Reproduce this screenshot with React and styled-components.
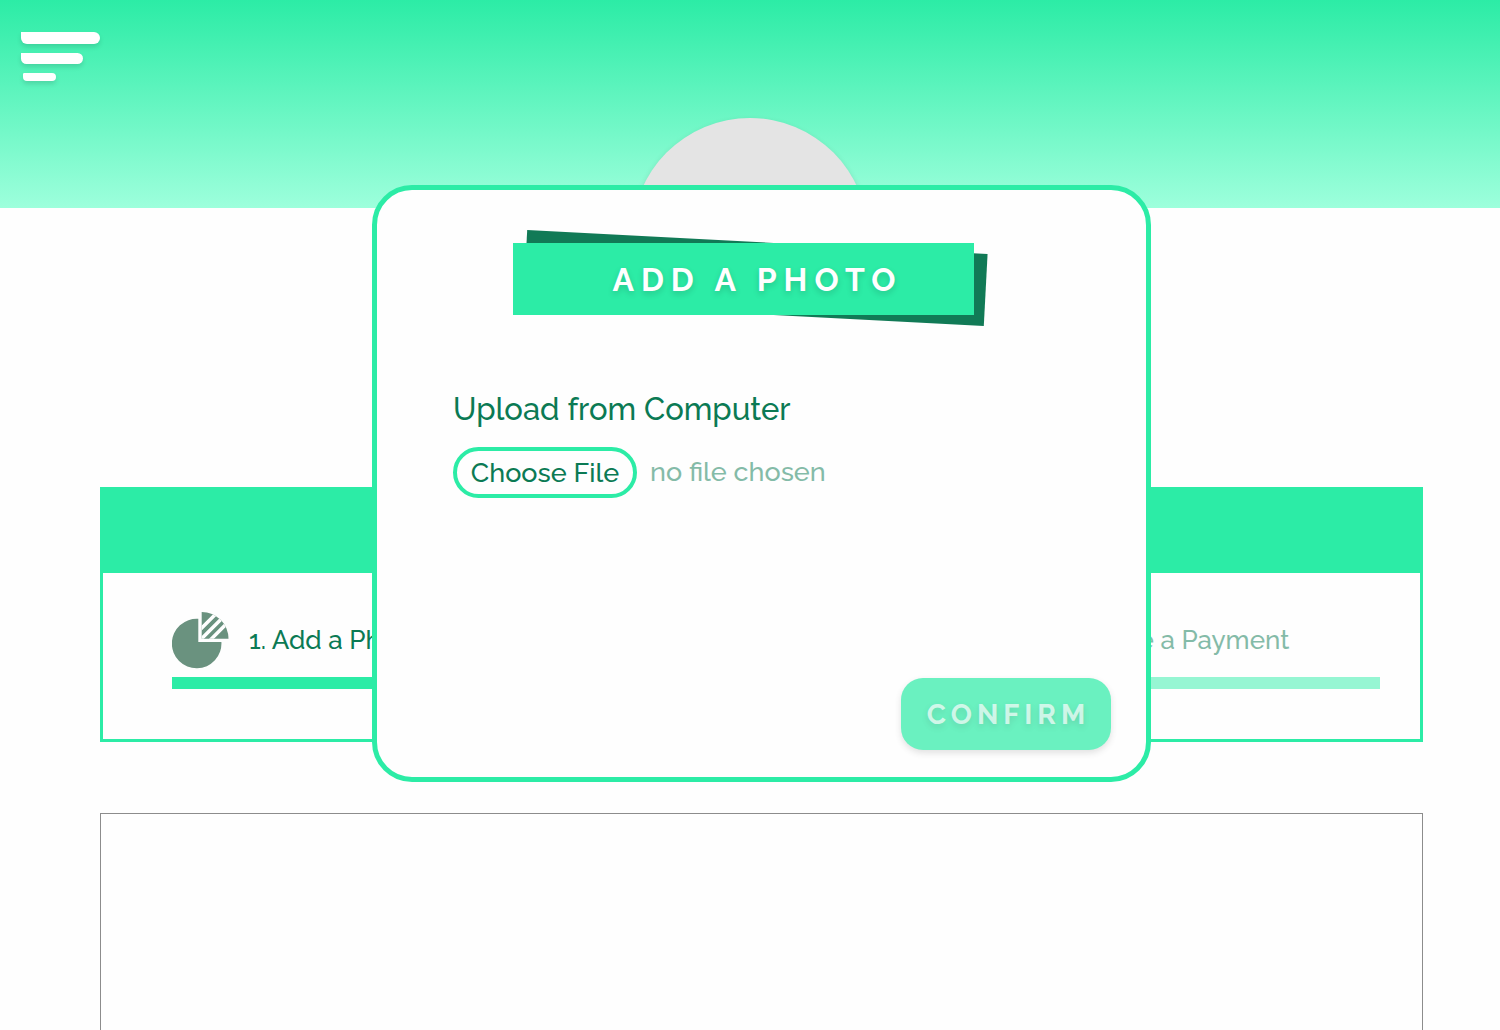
import React from 'react';
import styled, { createGlobalStyle } from 'styled-components';

const GlobalStyle = createGlobalStyle`
    * {
        box-sizing: border-box;
    }
    body {
        margin: 0;
        background-color: #fefefe;
        font-family: 'Raleway', 'Lato', sans-serif;
        font-weight: 500;
        color: #0b7a54;
    }
`;

const Header = styled.header`
    height: 208px;
    padding: 32px 21px;
    background: linear-gradient(#2ceca6, #9dffdc);
`;

const MenuButton = styled.button`
    display: flex;
    flex-direction: column;
    align-items: flex-start;
    gap: 9px;
    padding: 0;
    border: none;
    background: none;
    cursor: pointer;
`;

const MenuBar = styled.span`
    width: ${(props) => props.$width}px;
    height: ${(props) => props.$height}px;
    margin-left: ${(props) => (props.$indent ? 2 : 0)}px;
    border-radius: ${(props) => (props.$indent ? '2px 6px 6px 6px' : '0 6px 6px 6px')};
    background-color: white;
    box-shadow: 0 3px 5px rgba(0, 0, 0, 0.12);
`;

const Avatar = styled.div`
    width: 236px;
    height: 236px;
    margin: -90px auto 0;
    border-radius: 50%;
    background-color: #e4e4e4;
    box-shadow: 0 3px 6px rgba(0, 0, 0, 0.16);
`;

const Content = styled.main`
    display: flex;
    flex-direction: column;
    gap: 71px;
    padding: 133px 77px 0 100px;
`;

const StepsCard = styled.section`
    border: 3px solid #2ceca6;
`;

const StepsHead = styled.div`
    height: 83px;
    background-color: #2ceca6;
`;

const StepList = styled.ol`
    display: grid;
    grid-template-columns: repeat(3, 1fr);
    column-gap: 12px;
    margin: 0;
    padding: 38px 40px 50px 69px;
    list-style: none;
`;

const StepLabel = styled.div`
    display: flex;
    align-items: center;
    gap: 20px;
    height: 58px;
    font-size: 26px;
    white-space: nowrap;
    opacity: ${(props) => (props.$active ? 1 : 0.5)};
`;

const StepBar = styled.div`
    height: 12px;
    margin-top: 8px;
    background-color: ${(props) => (props.$active ? '#2ceca6' : '#96f6d3')};
`;

const Board = styled.section`
    min-height: 400px;
    border: 1px solid #8c8c8c;
`;

const Overlay = styled.div`
    position: fixed;
    inset: 0;
    display: flex;
    justify-content: center;
    align-items: flex-start;
    padding: 185px 77px 0 100px;
`;

const Modal = styled.div`
    display: flex;
    flex-direction: column;
    width: 779px;
    min-height: 597px;
    padding: 53px 35px 27px 76px;
    border: 5px solid #2ceca6;
    border-radius: 40px;
    background-color: #fefefe;
`;

const Banner = styled.div`
    position: relative;
    width: 461px;
    margin-left: 60px;

    &::before {
        content: '';
        position: absolute;
        inset: 0;
        background-color: #117a56;
        transform: translate(12px, -1px) rotate(3deg);
    }
`;

const Title = styled.h1`
    position: relative;
    margin: 0;
    padding: 2px 0 0 28px;
    background-color: #2ceca6;
    color: white;
    font-size: 32px;
    font-weight: 700;
    line-height: 70px;
    letter-spacing: 7px;
    text-align: center;
    text-shadow: 0 3px 6px rgba(0, 0, 0, 0.16);
`;

const UploadTitle = styled.h2`
    margin: 72px 0 16px;
    font-size: 31px;
    font-weight: 500;
    line-height: 44px;
`;

const FileRow = styled.div`
    display: flex;
    align-items: center;
    gap: 13px;
    font-size: 27px;
`;

const FileInput = styled.input`
    position: absolute;
    width: 1px;
    height: 1px;
    opacity: 0;
`;

const FileButton = styled.label`
    width: 184px;
    border: 4px solid #2ceca6;
    border-radius: 26px;
    line-height: 43px;
    text-align: center;
    cursor: pointer;
`;

const FileName = styled.span`
    padding-bottom: 2px;
    opacity: 0.5;
`;

const ConfirmButton = styled.button`
    align-self: flex-end;
    width: 210px;
    height: 72px;
    margin-top: auto;
    padding: 0 0 0 5px;
    border: none;
    border-radius: 22px;
    background-color: #2ceca6;
    box-shadow: 0 3px 6px rgba(0, 0, 0, 0.16);
    color: white;
    font-family: inherit;
    font-size: 28px;
    font-weight: 700;
    letter-spacing: 5px;
    text-shadow: 0 3px 6px rgba(0, 0, 0, 0.16);

    &:disabled {
        opacity: 0.7;
        color: rgba(255, 255, 255, 0.7);
    }
`;

const PieIcon = () => (
    <svg width="57" height="57" viewBox="0 0 57 57" aria-hidden="true">
        <defs>
            <clipPath id="slice">
                <path d="M29.7 26.8V0A26.8 26.8 0 0 1 56.5 26.8Z" />
            </clipPath>
        </defs>
        <path d="M26.3 6.8A24.8 24.8 0 1 0 49.4 30H26.3Z" fill="#6a927f" />
        <g clipPath="url(#slice)">
            <rect x="29" width="28" height="27" fill="#6a927f" />
            <path
                d="M20 25.8L46 -0.2M20 36.3L56 0.3M30 36.3L60 6.3"
                stroke="#fefefe"
                strokeWidth="3.5"
            />
        </g>
    </svg>
);

const steps = ['1. Add a Photo', '2. Add Details', '3. Make a Payment'];

export default function App() {
    const [fileName, setFileName] = React.useState('');

    const onFileChange = (e) => {
        const file = e.target.files[0];
        setFileName(file ? file.name : '');
    }

    return (
        <>
            <GlobalStyle />
            <Header>
                <MenuButton type="button" aria-label="Menu">
                    <MenuBar $width={79} $height={12} />
                    <MenuBar $width={62} $height={11} />
                    <MenuBar $width={33} $height={8} $indent />
                </MenuButton>
            </Header>
            <Avatar />
            <Content>
                <StepsCard>
                    <StepsHead />
                    <StepList>
                        {steps.map((step, i) => (
                            <li key={step}>
                                <StepLabel $active={i === 0}>
                                    <PieIcon />
                                    {step}
                                </StepLabel>
                                <StepBar $active={i === 0} />
                            </li>
                        ))}
                    </StepList>
                </StepsCard>
                <Board />
            </Content>
            <Overlay>
                <Modal role="dialog" aria-labelledby="photo-title">
                    <Banner>
                        <Title id="photo-title">ADD A PHOTO</Title>
                    </Banner>
                    <UploadTitle>Upload from Computer</UploadTitle>
                    <FileRow>
                        <FileInput type="file" id="photo" accept="image/*" onChange={onFileChange} />
                        <FileButton htmlFor="photo">Choose File</FileButton>
                        <FileName>{fileName || 'no file chosen'}</FileName>
                    </FileRow>
                    <ConfirmButton type="button" disabled={!fileName}>CONFIRM</ConfirmButton>
                </Modal>
            </Overlay>
        </>
    )
}
